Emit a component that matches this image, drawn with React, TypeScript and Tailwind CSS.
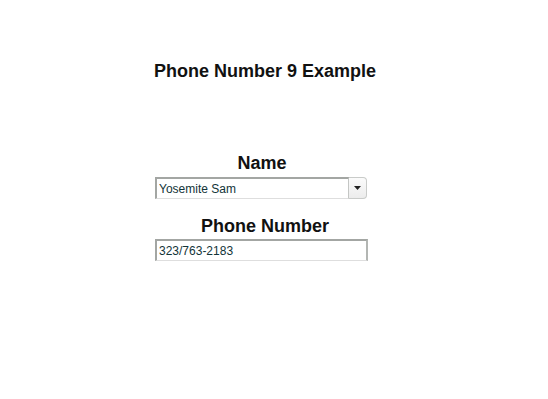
import { ChangeEvent, useState } from 'react';

const names = ['Yosemite Sam', 'Bugs Bunny', 'Daffy Duck'];

export default function App() {
  const [name, setName] = useState(names[0]);
  const [phone, setPhone] = useState('323/763-2183');

  return (
    <div className="min-h-[399px] w-[548px] bg-white pt-[61px] font-['Liberation_Sans',Arial,sans-serif] text-[#111]">
      <div className="ml-[154px] w-[222px]">
        {/* Title */}
        <h1 className="whitespace-nowrap text-center text-[18px] font-bold leading-[21px]">
          Phone Number 9 Example
        </h1>

        {/* Name */}
        <label className="mt-[71px] block pr-[6px] text-center text-[18px] font-bold leading-[21px]">Name</label>
        <div className="ml-[1px] mt-[3px] flex h-[22px] w-[213px]">
          <input
            value={name}
            onChange={(e: ChangeEvent<HTMLInputElement>) => setName(e.target.value)}
            className="h-[22px] w-[194px] border-b border-l-2 border-r border-t-2 border-b-[#dedede] border-l-[#a3a6a3] border-r-[#c4c6c4] border-t-[#a3a6a3] bg-white pl-[2px] text-[12px] leading-[18px] text-[#123438] outline-none"
          />
          <button className="flex h-[22px] w-[18px] items-center justify-center rounded-r-[4px] border border-l-0 border-[#c9cbc9] bg-gradient-to-b from-[#fbfbfb] to-[#ececec]">
            <svg width="7" height="4" viewBox="0 0 7 4">
              <path d="M0 0h7L3.5 4z" fill="#222" />
            </svg>
          </button>
        </div>

        {/* Phone */}
        <label className="mt-[17px] block text-center text-[18px] font-bold leading-[21px]">Phone Number</label>
        <input
          value={phone}
          onChange={(e: ChangeEvent<HTMLInputElement>) => setPhone(e.target.value)}
          className="ml-[1px] mt-[2px] block h-[22px] w-[213px] border-b border-l-2 border-r-2 border-t-2 border-b-[#dedede] border-l-[#a3a6a3] border-r-[#b3b6b3] border-t-[#a3a6a3] bg-white pl-[2px] text-[12px] leading-[18px] text-[#123438] outline-none"
        />
      </div>
    </div>
  );
}
